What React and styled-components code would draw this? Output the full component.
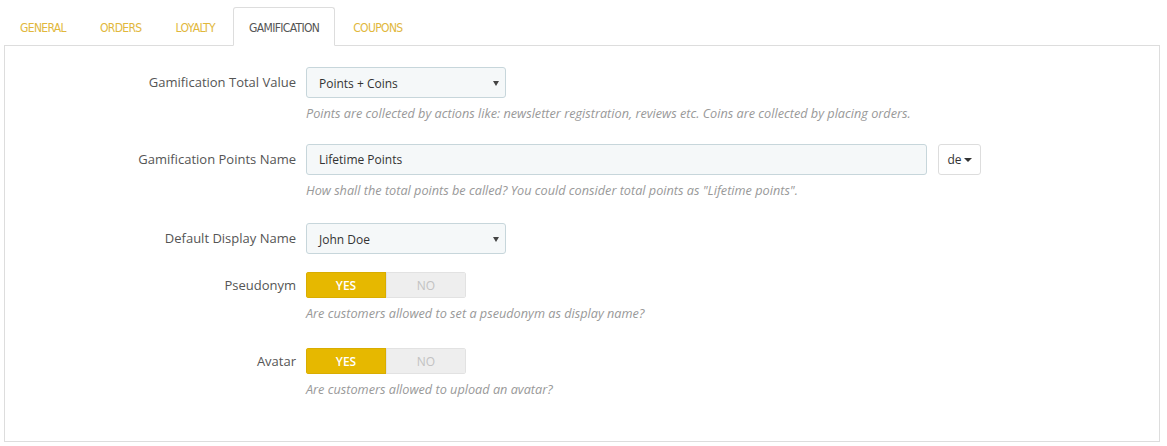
import React from "react";
import styled, { createGlobalStyle } from "styled-components";

const GlobalStyle = createGlobalStyle`
  html, body {
    margin: 0;
    padding: 0;
    background: #fff;
  }
  body {
    font-family: "Open Sans", "DejaVu Sans", sans-serif;
    color: #555;
  }
`;

const TABS = ["General", "Orders", "Loyalty", "Gamification", "Coupons"];

const App = () => {
  return (
    <>
      <GlobalStyle />
      <Page>
        <TabList>
          {TABS.map((tab) => (
            <Tab key={tab} active={tab === "Gamification"}>
              {tab.toUpperCase()}
            </Tab>
          ))}
        </TabList>
        <Panel>
          <FormRow gap={22}>
            <Label>Gamification Total Value</Label>
            <Field>
              <Select>
                <span>Points + Coins</span>
                <Caret />
              </Select>
              <Help>
                Points are collected by actions like: newsletter registration,
                reviews etc. Coins are collected by placing orders.
              </Help>
            </Field>
          </FormRow>

          <FormRow gap={24}>
            <Label>Gamification Points Name</Label>
            <Field>
              <InputGroup>
                <TextInput>Lifetime Points</TextInput>
                <LangButton>
                  de
                  <Caret small dark />
                </LangButton>
              </InputGroup>
              <Help>
                How shall the total points be called? You could consider total
                points as "Lifetime points".
              </Help>
            </Field>
          </FormRow>

          <FormRow gap={18}>
            <Label>Default Display Name</Label>
            <Field>
              <Select>
                <span>John Doe</span>
                <Caret />
              </Select>
            </Field>
          </FormRow>

          <FormRow gap={26}>
            <Label switchRow>Pseudonym</Label>
            <Field>
              <Switch>
                <SwitchOption on>YES</SwitchOption>
                <SwitchOption>NO</SwitchOption>
              </Switch>
              <Help>
                Are customers allowed to set a pseudonym as display name?
              </Help>
            </Field>
          </FormRow>

          <FormRow gap={0}>
            <Label switchRow>Avatar</Label>
            <Field>
              <Switch>
                <SwitchOption on>YES</SwitchOption>
                <SwitchOption>NO</SwitchOption>
              </Switch>
              <Help>Are customers allowed to upload an avatar?</Help>
            </Field>
          </FormRow>
        </Panel>
      </Page>
    </>
  );
};

const Page = styled.div`
  padding: 7px 7px 0 4px;
`;

const TabList = styled.div`
  display: flex;
  gap: 2px;
  height: 39px;
  margin-bottom: -1px;
`;

const Tab = styled.div`
  display: flex;
  align-items: center;
  padding: 2px 15px 0 15px;
  font-family: "DejaVu Sans Condensed", "DejaVu Sans", sans-serif;
  font-size: 12px;
  letter-spacing: -0.65px;
  color: ${(p) => (p.active ? "#555" : "#e1b73c")};
  background: ${(p) => (p.active ? "#fff" : "transparent")};
  border: 1px solid ${(p) => (p.active ? "#ddd" : "transparent")};
  border-bottom-color: ${(p) => (p.active ? "#fff" : "transparent")};
  border-radius: 3px 3px 0 0;
  position: relative;
  z-index: 1;
`;

const Panel = styled.div`
  border: 1px solid #ddd;
  background: #fff;
  padding: 21px 0 43px 0;
`;

const FormRow = styled.div`
  display: flex;
  align-items: flex-start;
  margin-bottom: ${(p) => p.gap}px;
`;

const Label = styled.div`
  width: 291px;
  flex-shrink: 0;
  padding-right: 10px;
  text-align: right;
  font-size: 13px;
  line-height: ${(p) => (p.switchRow ? "26px" : "31px")};
  color: #555;
`;

const Field = styled.div`
  display: flex;
  flex-direction: column;
`;

const Select = styled.div`
  width: 200px;
  height: 31px;
  box-sizing: border-box;
  display: flex;
  align-items: center;
  justify-content: space-between;
  padding: 1px 6px 0 12px;
  background: #f5f8f9;
  border: 1px solid #c7d6db;
  border-radius: 3px;
  font-size: 12px;
  color: #333;
`;

const Caret = styled.span`
  width: 0;
  height: 0;
  border-left: ${(p) => (p.small ? 4 : 3)}px solid transparent;
  border-right: ${(p) => (p.small ? 4 : 3)}px solid transparent;
  border-top: ${(p) => (p.small ? 4 : 5)}px solid
    ${(p) => (p.dark ? "#333" : "#444")};
  margin-left: ${(p) => (p.small ? 2 : 0)}px;
`;

const InputGroup = styled.div`
  display: flex;
  align-items: center;
  gap: 11px;
`;

const TextInput = styled.div`
  width: 621px;
  height: 31px;
  box-sizing: border-box;
  display: flex;
  align-items: center;
  padding: 0 12px;
  background: #f5f8f9;
  border: 1px solid #c7d6db;
  border-radius: 3px;
  font-size: 12px;
  color: #333;
`;

const LangButton = styled.div`
  width: 43px;
  height: 31px;
  box-sizing: border-box;
  display: flex;
  align-items: center;
  justify-content: center;
  background: #fff;
  border: 1px solid #ddd;
  border-radius: 3px;
  font-size: 12px;
  color: #333;
`;

const Help = styled.div`
  margin-top: 6px;
  font-size: 12.7px;
  line-height: 18px;
  font-style: italic;
  color: #999;
`;

const Switch = styled.div`
  display: flex;
  width: 160px;
  height: 26px;
  border-radius: 3px;
  overflow: hidden;
`;

const SwitchOption = styled.div`
  flex: 1;
  display: flex;
  align-items: center;
  justify-content: center;
  font-size: 12px;
  font-weight: ${(p) => (p.on ? 600 : 400)};
  color: ${(p) => (p.on ? "#fff" : "#c2c2c2")};
  background: ${(p) => (p.on ? "#e6b800" : "#eeeeee")};
  box-shadow: ${(p) =>
    p.on ? "inset 0 0 0 1px #d9ad00" : "inset 0 0 0 1px #e2e2e2"};
`;

export default App;
